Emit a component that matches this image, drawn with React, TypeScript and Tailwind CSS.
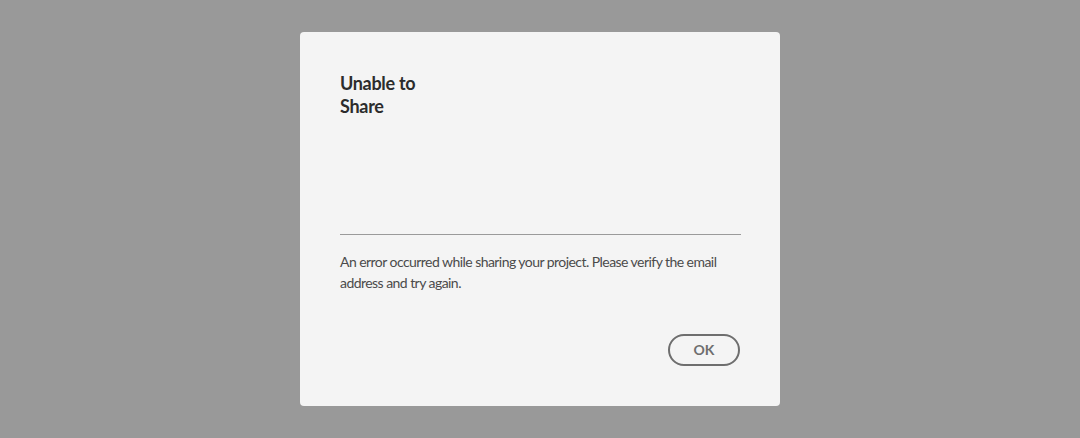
import React from "react";

export default function App() {
  return (
    <div className="w-[1080px] h-[438px] bg-[#999999] flex items-start justify-center pt-[32px]" style={{ fontFamily: "Lato, 'Noto Sans', sans-serif" }}>
      <div className="w-[480px] h-[374px] bg-[#f4f4f4] rounded-[4px] px-[40px] pt-[40px] pb-[40px] flex flex-col">
        <div className="h-[162px]">
          <h1 className="text-[18px] leading-[23px] font-bold text-[#2c2c2c] w-[100px] tracking-[-0.3px]">Unable to Share</h1>
        </div>
        <div className="h-px bg-[#9a9a9a] w-[401px]" />
        <p className="mt-[16px] text-[14px] leading-[21px] text-[#4b4b4b] w-[400px] tracking-[-0.55px]">
          An error occurred while sharing your project. Please verify the email address and try again.
        </p>
        <div className="mt-auto flex justify-end">
          <button className="w-[72px] h-[32px] rounded-full border-2 border-[#6e6e6e] text-[#6e6e6e] text-[14px] font-bold leading-none">OK</button>
        </div>
      </div>
    </div>
  );
}
